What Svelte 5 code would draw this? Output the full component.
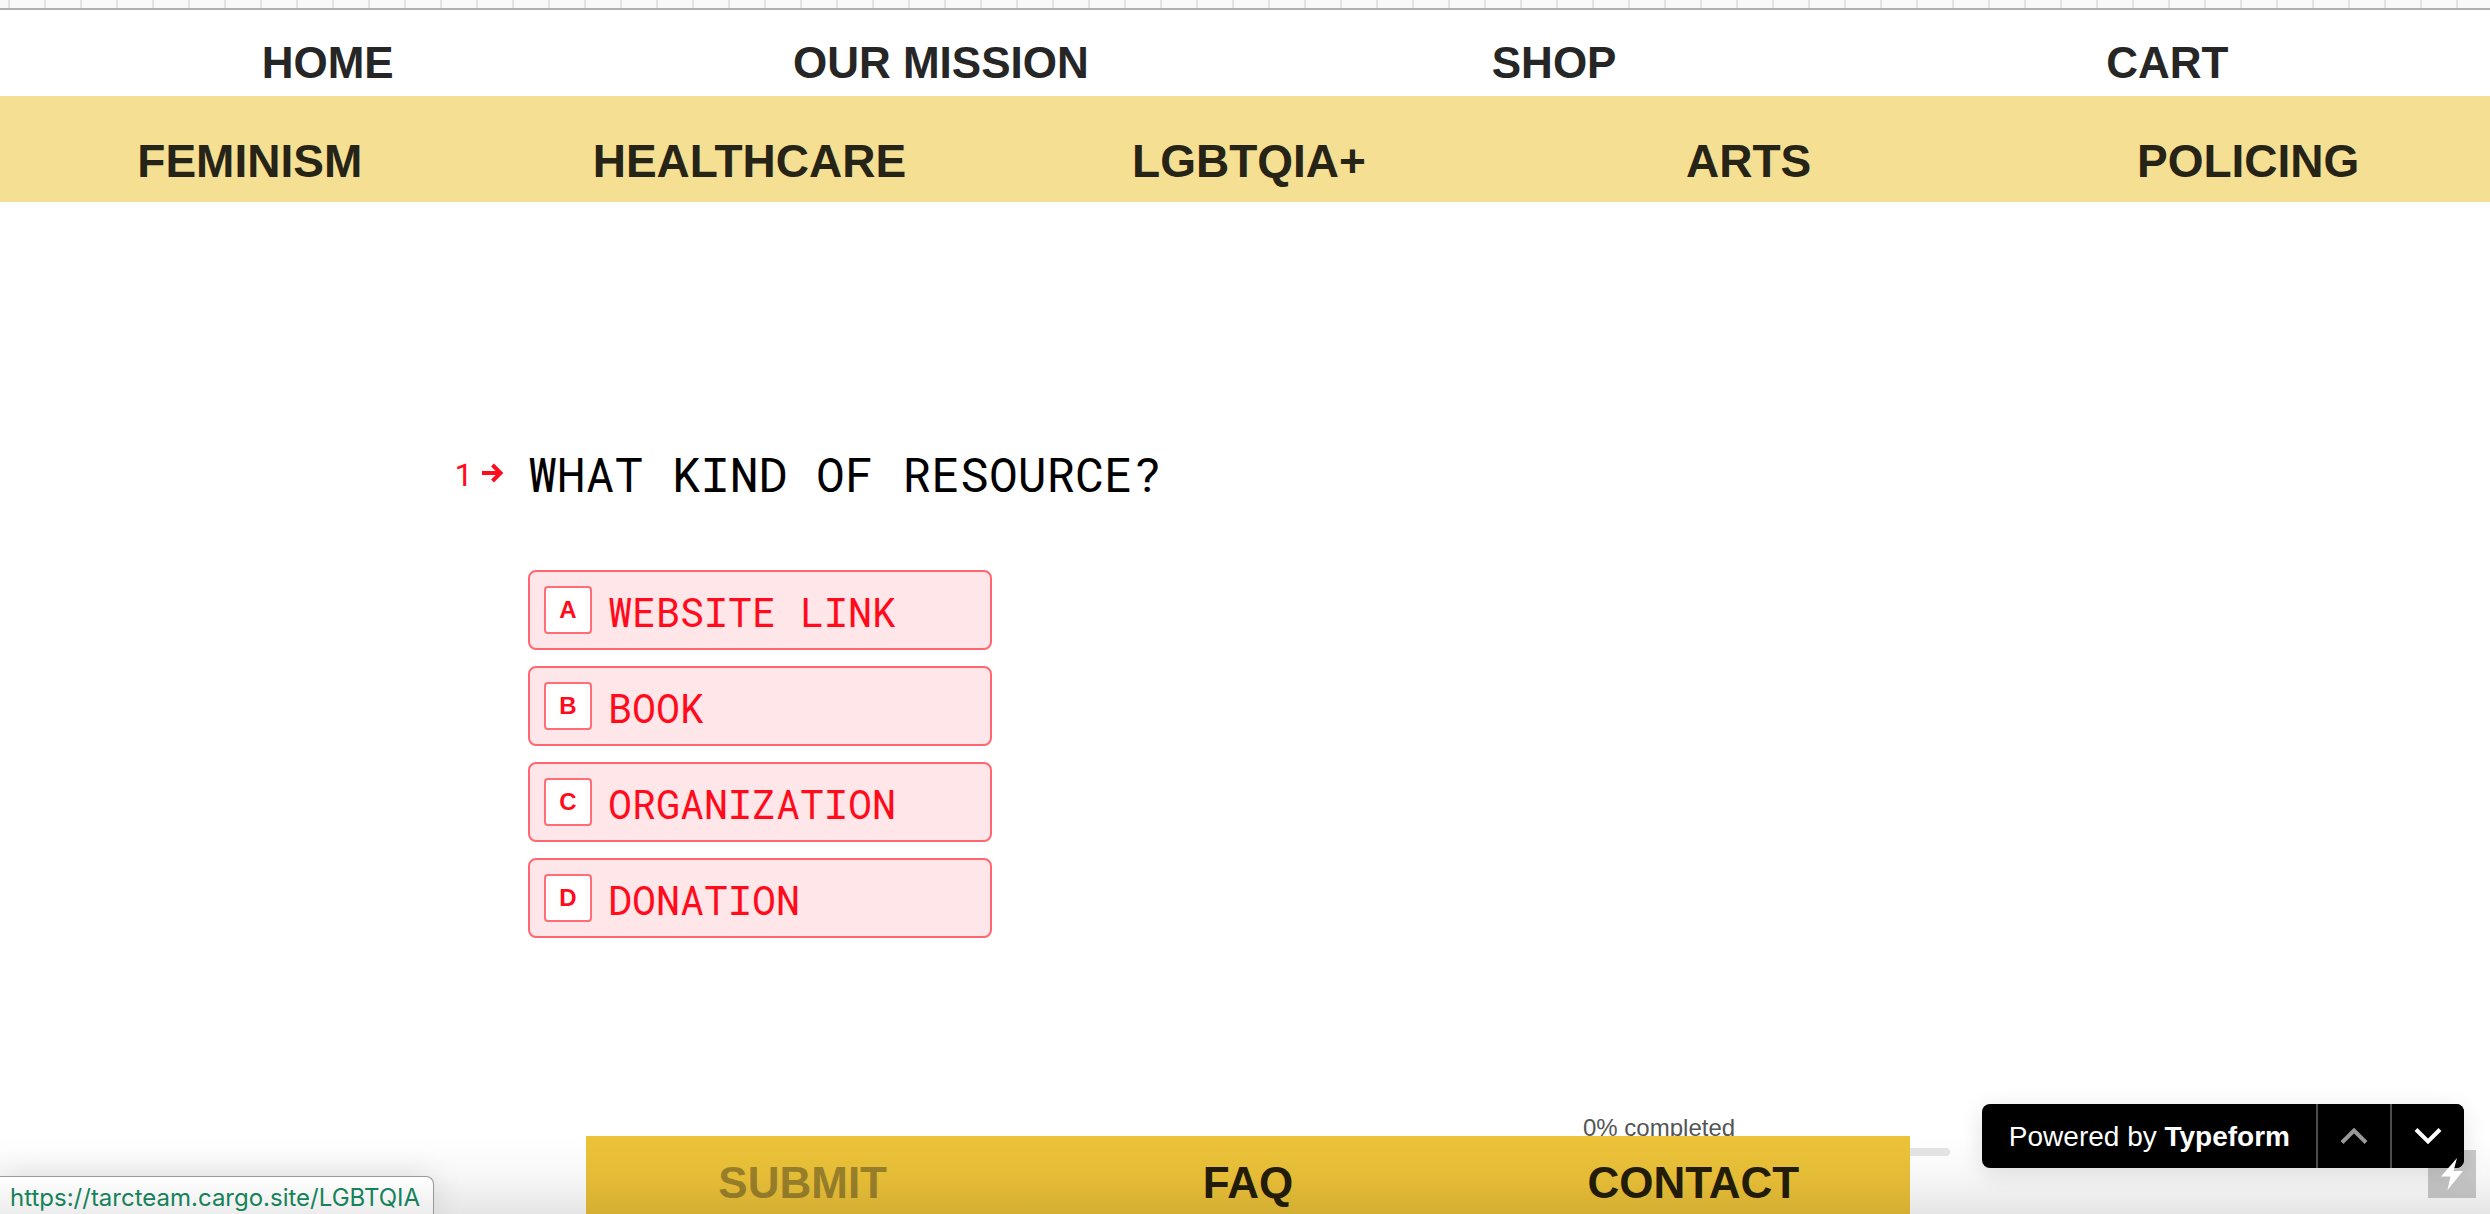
<script lang="ts">
    const mainLinks = [
        { label: 'HOME', href: '#home' },
        { label: 'OUR MISSION', href: '#mission' },
        { label: 'SHOP', href: '#shop' },
        { label: 'CART', href: '#cart' }
    ];

    const topicLinks = [
        { label: 'FEMINISM', href: '#feminism' },
        { label: 'HEALTHCARE', href: '#healthcare' },
        { label: 'LGBTQIA+', href: '#lgbtqia' },
        { label: 'ARTS', href: '#arts' },
        { label: 'POLICING', href: '#policing' }
    ];

    const footerLinks = [
        { label: 'SUBMIT', href: '#submit', current: true },
        { label: 'FAQ', href: '#faq', current: false },
        { label: 'CONTACT', href: '#contact', current: false }
    ];

    const choices = ['WEBSITE LINK', 'BOOK', 'ORGANIZATION', 'DONATION'];

    let selected: string | null = $state(null);
</script>

<div class="page">
    <header>
        <div class="ruler"></div>
        <nav class="main-nav" aria-label="Main">
            {#each mainLinks as link}
                <a href={link.href}>{link.label}</a>
            {/each}
        </nav>
        <div class="topics">
            <nav class="topic-nav" aria-label="Topics">
                {#each topicLinks as link}
                    <a href={link.href}>{link.label}</a>
                {/each}
            </nav>
        </div>
    </header>

    <main>
        <div class="number">
            <span>1</span>
            <svg width="22" height="20" viewBox="0 0 22 20" aria-hidden="true">
                <path d="M0 10h18M10.500 2L18.500 10L10.500 18" fill="none" stroke="#ff0b1c" stroke-width="4" />
            </svg>
        </div>
        <div class="question">
            <h1>WHAT KIND OF RESOURCE?</h1>
            <div class="choices">
                {#each choices as choice, i}
                    <button
                        class="choice"
                        aria-pressed={selected === choice}
                        onclick={() => (selected = choice)}
                    >
                        <span class="key">{String.fromCharCode(65 + i)}</span>
                        <span class="label">{choice}</span>
                    </button>
                {/each}
            </div>
        </div>
    </main>

    <div class="progress">
        <span id="progress-label">0% completed</span>
        <div class="track" role="progressbar" aria-labelledby="progress-label" aria-valuenow="0"></div>
    </div>

    <div class="footer">
        <nav class="footer-nav" aria-label="Footer">
            {#each footerLinks as link}
                <a href={link.href} class:current={link.current}>{link.label}</a>
            {/each}
        </nav>
    </div>

    <div class="controls">
        <a class="powered" href="#typeform">Powered by <b>Typeform</b></a>
        <button aria-label="Previous question" disabled>
            <svg width="28" height="18" viewBox="0 0 28 18" aria-hidden="true">
                <path d="M2 15.500L14 3.500L26 15.500" fill="none" stroke="#999" stroke-width="4" />
            </svg>
        </button>
        <button aria-label="Next question">
            <svg width="28" height="18" viewBox="0 0 28 18" aria-hidden="true">
                <path d="M2 2.500L14 14.500L26 2.500" fill="none" stroke="#fff" stroke-width="4" />
            </svg>
        </button>
    </div>

    <div class="shade"></div>

    <a class="bolt" href="#cargo" aria-label="Site tools">
        <svg width="22" height="32" viewBox="0 0 22 32" aria-hidden="true">
            <path d="M16 0L0 18.500h9.500L6.500 32L22 13h-9.500z" fill="#fff" />
        </svg>
    </a>

    <div class="status">https://tarcteam.cargo.site/LGBTQIA</div>
</div>

<style>
    :global(body) {
        background: #fff;
    }

    .page {
        position: relative;
        min-height: 100vh;
        overflow: hidden;
        font-family: "Liberation Sans", Arial, sans-serif;
    }

    a {
        color: inherit;
        text-decoration: none;
    }

    button {
        margin: 0;
        font: inherit;
        cursor: pointer;
    }

    .ruler {
        height: 8px;
        border-bottom: 2px solid #b0b0b0;
        background: repeating-linear-gradient(to right, #f9f9f9 0 8px, #e2e2e2 8px 10px, #f9f9f9 10px 36px);
    }

    .main-nav,
    .topic-nav,
    .footer-nav {
        display: grid;
        grid-auto-flow: column;
        grid-auto-columns: 1fr;
        text-align: center;
        font-weight: 700;
        font-size: 44px;
        line-height: 50px;
    }

    .main-nav {
        padding: 28px 16px 8px 21px;
        color: #262626;
    }

    .topics {
        background: #f5df92;
        overflow: hidden;
    }

    .topic-nav {
        margin-right: -8px;
        padding: 40px 0 16px;
        color: #262317;
        font-size: 46px;
    }

    main {
        display: flex;
        gap: 24px;
        padding: 244px 454px 0;
        font-family: "Roboto Mono", "DejaVu Sans Mono", monospace;
    }

    .number {
        display: flex;
        align-items: center;
        justify-content: space-between;
        width: 50px;
        height: 54px;
        font-size: 32px;
        color: #ff0b1c;
    }

    h1 {
        margin: 0;
        font-size: 48px;
        font-weight: 400;
        line-height: 56px;
        color: #000;
    }

    .choices {
        display: flex;
        flex-direction: column;
        gap: 16px;
        width: 464px;
        margin-top: 68px;
    }

    .choice {
        display: flex;
        align-items: center;
        gap: 16px;
        height: 80px;
        padding: 0 14px;
        border: 2px solid #ff6672;
        border-radius: 8px;
        background: #ffe6e8;
        color: #ff0b1c;
        font-size: 40px;
        line-height: 48px;
    }

    .key {
        box-sizing: border-box;
        width: 48px;
        height: 48px;
        border: 2px solid #ff6d78;
        border-radius: 4px;
        background: #fff;
        font: 700 24px/44px "Liberation Sans", Arial, sans-serif;
    }

    .label {
        padding-top: 3px;
    }

    .progress {
        position: absolute;
        right: 540px;
        bottom: 58px;
        width: 367px;
        font-size: 24px;
        line-height: 28px;
        color: #555;
    }

    .track {
        height: 8px;
        margin-top: 6px;
        border-radius: 4px;
        background: #e5e5e5;
    }

    .footer {
        position: absolute;
        left: 586px;
        right: 580px;
        bottom: 0;
        overflow: hidden;
        background: #ecc238;
        color: #231d08;
    }

    .footer-nav {
        margin: 0 -6px;
        padding: 22px 0 6px;
    }

    .current {
        color: #9b822b;
    }

    .controls {
        position: absolute;
        z-index: 1;
        right: 26px;
        bottom: 46px;
        display: flex;
        height: 64px;
        overflow: hidden;
        border-radius: 8px;
        background: #000;
        color: #fff;
        box-shadow: 0 6px 24px rgba(0, 0, 0, 0.12);
    }

    .powered {
        padding: 0 26px 0 27px;
        font-size: 28px;
        line-height: 66px;
    }

    .controls button {
        display: grid;
        place-items: center;
        width: 74px;
        padding: 0;
        border: 0;
        border-left: 2px solid #4d4d4d;
        background: #000;
    }

    .shade {
        position: absolute;
        left: 0;
        right: 0;
        bottom: 0;
        height: 76px;
        background: linear-gradient(to bottom, rgba(0, 0, 0, 0), rgba(0, 0, 0, 0.03) 50%, rgba(0, 0, 0, 0.1));
        pointer-events: none;
    }

    .bolt {
        position: absolute;
        z-index: 2;
        right: 14px;
        bottom: 16px;
        display: grid;
        place-items: center;
        width: 48px;
        height: 48px;
        background: rgba(0, 0, 0, 0.2);
    }

    .status {
        position: absolute;
        left: 0;
        bottom: 0;
        padding: 4px 13px 0 10px;
        border: 1px solid #999;
        border-width: 1px 1px 0 0;
        border-radius: 0 8px 0 0;
        background: linear-gradient(to bottom, #fff, #ececec);
        box-shadow: 0 0 32px rgba(0, 0, 0, 0.12);
        color: #16825a;
        font-family: Inter, sans-serif;
        font-size: 24px;
        line-height: 33px;
    }
</style>
